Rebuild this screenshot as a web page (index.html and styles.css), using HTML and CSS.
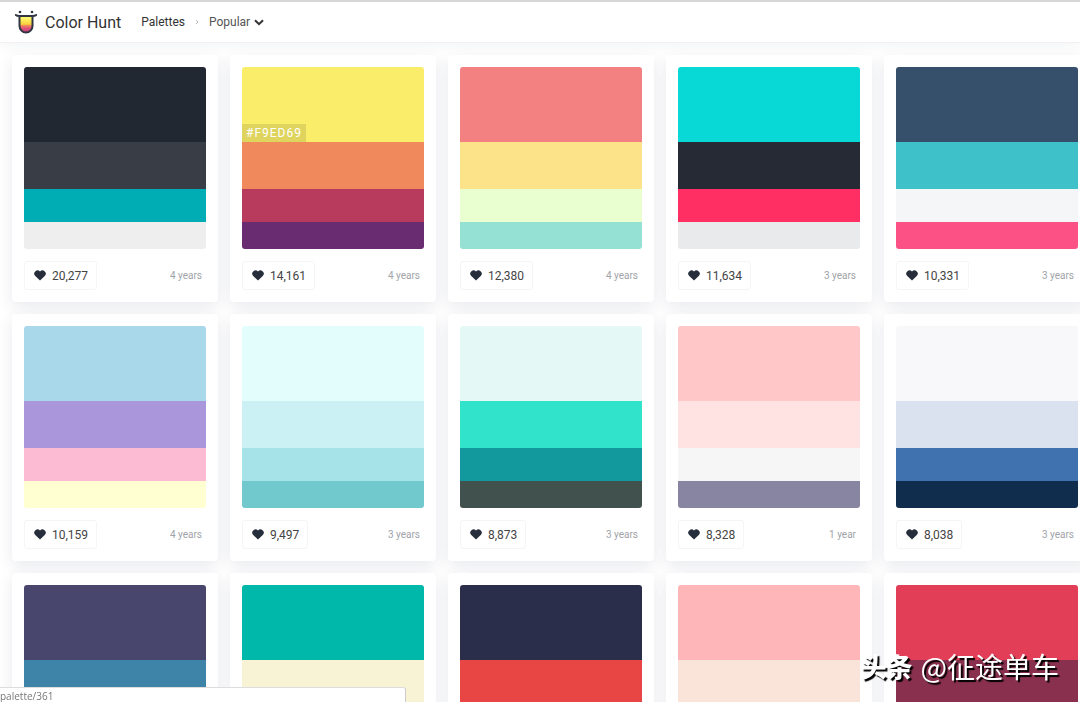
FILE: index.html
```html
<!DOCTYPE html>
<html lang="en">

<head>
    <meta charset="utf-8">
    <meta name="viewport" content="width=device-width, initial-scale=1.0">
    <title>Color Hunt</title>
    <link rel="stylesheet" href="styles.css">
</head>

<body>
    <header class="header">
        <a href="#" class="logo">
            <svg class="logo_icon" viewBox="0 0 22 24" aria-hidden="true">
                <defs>
                    <linearGradient id="tongue" x1="0" y1="0" x2="0" y2="1">
                        <stop offset="0.15" stop-color="#fff56a" />
                        <stop offset="0.5" stop-color="#fbd03c" />
                        <stop offset="0.58" stop-color="#f0885a" />
                        <stop offset="0.75" stop-color="#e0507a" />
                        <stop offset="1" stop-color="#b8407e" />
                    </linearGradient>
                </defs>
                <path fill="url(#tongue)" d="M4.500 6H17.500V16A6.500 6.500 0 0 1 4.500 16Z" />
                <path class="logo_line" d="M0.800 5Q2 6 4.500 6H17.500Q20 6 21.200 5M4.500 6V16A6.500 6.500 0 0 0 17.500 16V6" />
                <circle cx="5" cy="2" r="1.300" fill="#2f3542" />
                <circle cx="17" cy="2" r="1.300" fill="#2f3542" />
            </svg>
            <span>Color Hunt</span>
        </a>
        <nav class="menu">
            <a href="#">Palettes</a>
            <svg class="separator" viewBox="0 0 4 6" aria-hidden="true">
                <path d="M1 1l2 2-2 2" />
            </svg>
            <button class="sort">Popular
                <svg class="arrow" viewBox="0 0 10 7" aria-hidden="true">
                    <path d="M1 1.200l4 4 4-4" />
                </svg>
            </button>
        </nav>
    </header>
    <main id="palettes"></main>
    <template>
        <article class="card">
            <div class="palette"></div>
            <div class="info">
                <button class="like">
                    <svg class="heart" viewBox="0 0 12 11" aria-hidden="true">
                        <path d="M6 10.600L1 5.700A3.100 3.100 0 0 1 6 1.600A3.100 3.100 0 0 1 11 5.700Z" />
                    </svg>
                    <span class="likes"></span>
                </button>
                <span class="age"></span>
            </div>
        </article>
    </template>
    <div class="status">palette/361</div>
    <div class="watermark"><b>头条</b> <span>@征途单车</span></div>
    <script>
        const palettes = [
            { colors: ["#222831", "#393E46", "#00ADB5", "#EEEEEE"], likes: "20,277", age: "4 years" },
            { colors: ["#F9ED69", "#F08A5D", "#B83B5E", "#6A2C70"], likes: "14,161", age: "4 years", label: true },
            { colors: ["#F38181", "#FCE38A", "#EAFFD0", "#95E1D3"], likes: "12,380", age: "4 years" },
            { colors: ["#08D9D6", "#252A34", "#FF2E63", "#E9EAEC"], likes: "11,634", age: "3 years" },
            { colors: ["#364F6B", "#3FC1C9", "#F5F6F8", "#FC5185"], likes: "10,331", age: "3 years" },
            { colors: ["#A8D8EA", "#AA96DA", "#FCBAD3", "#FFFFD2"], likes: "10,159", age: "4 years" },
            { colors: ["#E3FDFD", "#CBF1F5", "#A6E3E9", "#71C9CE"], likes: "9,497", age: "3 years" },
            { colors: ["#E4F9F5", "#30E3CA", "#11999E", "#40514E"], likes: "8,873", age: "3 years" },
            { colors: ["#FFC7C7", "#FFE2E2", "#F6F6F6", "#8785A2"], likes: "8,328", age: "1 year" },
            { colors: ["#F8F8FB", "#DBE2EF", "#3F72AF", "#112D4E"], likes: "8,038", age: "3 years" },
            { colors: ["#48466D", "#3D84A8", "#46CDCF", "#ABEDD8"] },
            { colors: ["#00B8A9", "#F8F3D4", "#F6416C", "#FFDE7D"] },
            { colors: ["#2B2E4A", "#E84545", "#903749", "#53354A"] },
            { colors: ["#FFB6B9", "#FAE3D9", "#BBDED6", "#61C0BF"] },
            { colors: ["#E23E57", "#88304E", "#522546", "#311D3F"] }
        ];

        const dest = document.querySelector("#palettes");
        const template = document.querySelector("template").content;

        palettes.forEach(item => {
            const clone = template.cloneNode(true);
            const palette = clone.querySelector(".palette");

            item.colors.forEach((color, i) => {
                const stripe = document.createElement("div");
                stripe.className = "stripe";
                stripe.style.backgroundColor = color;
                // Hex code on the first color
                if (item.label && i == 0) {
                    const code = document.createElement("span");
                    code.className = "code";
                    code.textContent = color;
                    stripe.appendChild(code);
                }
                palette.appendChild(stripe);
            });

            if (item.likes) {
                clone.querySelector(".likes").textContent = item.likes;
                clone.querySelector(".age").textContent = item.age;
            } else {
                clone.querySelector(".info").remove();
            }
            dest.appendChild(clone);
        });
    </script>
</body>

</html>
```
FILE: styles.css
```css
* {
    box-sizing: border-box;
}

body {
    margin: 0;
    height: 100vh;
    overflow: hidden;
    font-family: Roboto, "Liberation Sans", sans-serif;
    color: #333;
    background-color: white;
}

a {
    color: inherit;
    text-decoration: none;
}

button {
    font: inherit;
    color: inherit;
    background-color: white;
    border: none;
    padding: 0;
    cursor: pointer;
}

svg {
    display: block;
    fill: none;
}

/*Header*/
.header {
    display: flex;
    align-items: center;
    gap: 20px;
    height: 43px;
    padding-left: 15px;
    border-top: 2px solid #d6d6d6;
    border-bottom: 1px solid #f1f1f4;
    box-shadow: 0 2px 12px rgba(40, 45, 90, 0.06);
}

.logo {
    display: flex;
    align-items: center;
    gap: 8px;
    font-size: 16px;
}

.logo_icon {
    width: 22px;
    height: 24px;
}

.logo_line {
    stroke: #2f3542;
    stroke-width: 2;
    stroke-linecap: round;
}

.menu {
    display: flex;
    align-items: center;
    gap: 10px;
    font-size: 12px;
}

.separator {
    width: 4px;
    height: 6px;
    stroke: #bbb;
}

.sort {
    display: flex;
    align-items: center;
    gap: 4px;
    color: #555;
}

.arrow {
    width: 10px;
    height: 7px;
    stroke: #333;
    stroke-width: 2;
}

/*Palettes*/
#palettes {
    display: grid;
    grid-template-columns: repeat(5, minmax(206px, 1fr));
    gap: 12px;
    padding: 12px 0 12px 12px;
    margin-right: -10px;
}

.card {
    padding: 12px 12px 0;
    background-color: white;
    border-radius: 4px;
    box-shadow: 0 5px 15px rgba(40, 45, 90, 0.1);
}

.palette {
    display: grid;
    grid-template-rows: 75px 47px 33px 27px;
    border-radius: 3px;
    overflow: hidden;
}

.stripe {
    display: flex;
    align-items: flex-end;
}

.code {
    padding: 0 4px;
    font-size: 12px;
    line-height: 18px;
    letter-spacing: 1px;
    color: white;
    background-color: rgba(0, 0, 0, 0.1);
}

.info {
    display: flex;
    justify-content: space-between;
    align-items: center;
    height: 53px;
    padding-right: 4px;
}

.like {
    display: flex;
    align-items: center;
    gap: 6px;
    height: 29px;
    padding: 0 8px 0 9px;
    font-size: 12px;
    color: #444;
    border: 1px solid #f5f5f7;
    border-radius: 3px;
}

.heart {
    width: 12px;
    height: 11px;
    fill: #262d3b;
}

.age {
    font-size: 10px;
    color: #a0a3a8;
}

/*Link preview in the bottom corner*/
.status {
    position: fixed;
    left: 0;
    bottom: 0;
    width: 406px;
    height: 15px;
    font-family: "Open Sans", sans-serif;
    font-size: 10px;
    line-height: 17px;
    color: #777;
    background-color: white;
    border-top: 1px solid #ddd;
    border-right: 1px solid #ccc;
    border-radius: 0 3px 0 0;
}

.watermark {
    position: fixed;
    right: 21px;
    bottom: 16px;
    display: flex;
    align-items: center;
    gap: 8px;
    font-family: "Noto Sans CJK SC", sans-serif;
    font-size: 28px;
    line-height: 40px;
    color: white;
    text-shadow: 2px 2px 1px black;
}

.watermark b {
    font-size: 26px;
    font-weight: 900;
}
```
